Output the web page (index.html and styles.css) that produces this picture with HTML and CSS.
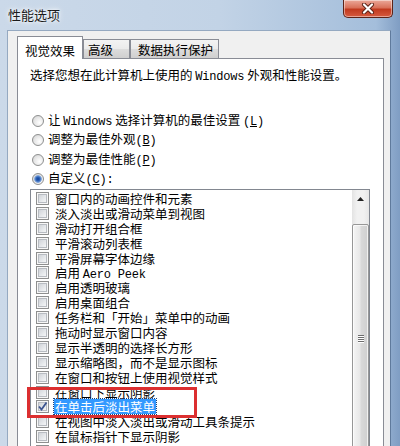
FILE: index.html
```html
<!DOCTYPE html>
<html lang="zh-CN">
<head>
  <meta charset="UTF-8">
  <meta name="viewport" content="width=device-width, initial-scale=1.0">
  <title>性能选项</title>
  <link rel="stylesheet" href="styles.css">
</head>
<body>
  <div class="window">
    <div class="titlebar">
      <span class="title">性能选项</span>
      <div class="close-btn">
        <svg width="14" height="11" viewBox="0 0 14 11">
          <path d="M3 1.5 L11 9.5 M11 1.5 L3 9.5" stroke="#5a2116" stroke-width="4" stroke-linecap="round"/>
          <path d="M3 1.5 L11 9.5 M11 1.5 L3 9.5" stroke="#fff" stroke-width="2.2" stroke-linecap="round"/>
        </svg>
      </div>
    </div>

    <div class="frame">
      <div class="client">
        <!-- tabs -->
        <div class="tabs">
          <div class="tab active">视觉效果</div>
          <div class="tab tab-adv">高级</div>
          <div class="tab tab-dep">数据执行保护</div>
        </div>

        <div class="panel">
          <p class="intro">选择您想在此计算机上使用的 <span class="latin">Windows</span> 外观和性能设置。</p>

          <div class="radio-group">
            <div class="radio"><span class="radio-mark"></span><span class="radio-text">让 <span class="latin">Windows</span> 选择计算机的最佳设置 <span class="latin">(<u>L</u>)</span></span></div>
            <div class="radio"><span class="radio-mark"></span><span class="radio-text">调整为最佳外观<span class="latin">(<u>B</u>)</span></span></div>
            <div class="radio"><span class="radio-mark"></span><span class="radio-text">调整为最佳性能<span class="latin">(<u>P</u>)</span></span></div>
            <div class="radio"><span class="radio-mark on"></span><span class="radio-text">自定义<span class="latin">(<u>C</u>):</span></span></div>
          </div>

          <div class="listbox">
            <ul class="items">
              <li class="item"><span class="check"></span><span class="label">窗口内的动画控件和元素</span></li>
              <li class="item"><span class="check"></span><span class="label">淡入淡出或滑动菜单到视图</span></li>
              <li class="item"><span class="check"></span><span class="label">滑动打开组合框</span></li>
              <li class="item"><span class="check"></span><span class="label">平滑滚动列表框</span></li>
              <li class="item"><span class="check"></span><span class="label">平滑屏幕字体边缘</span></li>
              <li class="item"><span class="check"></span><span class="label">启用 <span class="latin">Aero Peek</span></span></li>
              <li class="item"><span class="check"></span><span class="label">启用透明玻璃</span></li>
              <li class="item"><span class="check"></span><span class="label">启用桌面组合</span></li>
              <li class="item"><span class="check"></span><span class="label">任务栏和「开始」菜单中的动画</span></li>
              <li class="item"><span class="check"></span><span class="label">拖动时显示窗口内容</span></li>
              <li class="item"><span class="check"></span><span class="label">显示半透明的选择长方形</span></li>
              <li class="item"><span class="check"></span><span class="label">显示缩略图，而不是显示图标</span></li>
              <li class="item"><span class="check"></span><span class="label">在窗口和按钮上使用视觉样式</span></li>
              <li class="item"><span class="check"></span><span class="label">在窗口下显示阴影</span></li>
              <li class="item">
                <span class="check">
                  <svg width="11" height="11" viewBox="0 0 11 11"><path d="M2 5.5 L4.5 8.5 L9.5 1.5" fill="none" stroke="#3d5590" stroke-width="1.8"/></svg>
                </span>
                <span class="label selected">在单击后淡出菜单</span>
              </li>
              <li class="item"><span class="check"></span><span class="label">在视图中淡入淡出或滑动工具条提示</span></li>
              <li class="item"><span class="check"></span><span class="label">在鼠标指针下显示阴影</span></li>
              <li class="item"><span class="check"></span><span class="label">在桌面上为图标标签使用阴影</span></li>
            </ul>

            <div class="scrollbar">
              <div class="scroll-up">
                <svg width="7" height="4" viewBox="0 0 7 4"><polygon points="0,4 3.5,0 7,4" fill="#222"/></svg>
              </div>
              <div class="thumb">
                <span class="grip"></span>
                <span class="grip"></span>
                <span class="grip"></span>
                <span class="grip"></span>
              </div>
            </div>
          </div>
        </div>
      </div>
    </div>

    <!-- red highlight box drawn over the list -->
    <div class="annotation"></div>
  </div>
</body>
</html>
```

FILE: styles.css
```css
body {
  margin: 0;
  font-family: "Noto Sans CJK SC", sans-serif;
  font-size: 12.5px;
  color: #000;
}

.window {
  position: relative;
  width: 400px;
  height: 446px;
  overflow: hidden;
  display: flex;
  flex-direction: column;
  background: linear-gradient(to right, #cbd9e9 0%, #c2d3e6 55%, #a4bedb 94%, #7f9dc3 100%);
}

.titlebar {
  height: 30px;
  flex-shrink: 0;
  display: flex;
  align-items: flex-start;
}

.title {
  padding: 7px 0 0 8px;
  line-height: 16px;
  font-size: 13px;
  color: #1b1b1b;
  text-shadow: 0 0 6px #fff, 0 0 3px #fff;
}

.close-btn {
  margin-left: auto;
  margin-right: 7px;
  width: 50px;
  height: 18px;
  box-sizing: border-box;
  border: 1px solid #5c2318;
  border-top: none;
  border-radius: 0 0 5px 5px;
  background: linear-gradient(#eba99a, #d9715a 45%, #c13a1f 55%, #d65a3f 100%);
  box-shadow: inset 0 0 0 1px rgba(255, 255, 255, 0.45);
  display: flex;
  align-items: center;
  justify-content: center;
}

.frame {
  flex: 1;
  display: flex;
  padding: 0 9px 0 7px;
}

.client {
  flex: 1;
  background-color: #f0f0f0;
  border: 1px solid #95a9c1;
  border-right-color: #5f7a9c;
  border-bottom: none;
  padding: 5px 6px 0 9px;
}

/* tabs */
.tabs {
  position: relative;
  z-index: 1;
  display: flex;
  align-items: flex-end;
  height: 23px;
  margin-bottom: -1px;
}

.tab {
  height: 16px;
  line-height: 16px;
  padding: 1px 0 1px 0;
  border: 1px solid #898c95;
  border-bottom: none;
  margin-bottom: 1px;
  background: linear-gradient(#f3f3f3, #ebebeb 50%, #dddddd 50%, #cfcfcf);
  white-space: nowrap;
}

.tab.active {
  height: 16px;
  padding: 6px 7px 0 7px;
  margin-bottom: 0;
  background: #fff;
}

.tab-adv {
  padding: 2px 16px 0 4px;
}

.tab-dep {
  padding: 2px 5px 0 7px;
}

.panel {
  flex: 1;
  height: 420px;
  background-color: #fff;
  border: 1px solid #898c95;
}

.intro {
  margin: 0;
  padding: 8px 0 0 12px;
  line-height: 16px;
  white-space: nowrap;
}

.latin {
  font-family: "Liberation Mono", monospace;
  font-size: 12px;
  letter-spacing: -0.2px;
}

/* radio buttons */
.radio-group {
  margin: 26px 0 0 14px;
}

.radio {
  display: flex;
  align-items: center;
  height: 19.5px;
  white-space: nowrap;
}

.radio-text {
  line-height: 16px;
}

.radio-mark {
  width: 12px;
  height: 12px;
  margin-right: 4px;
  box-sizing: border-box;
  border: 1px solid #8e8f8f;
  border-radius: 50%;
  background: radial-gradient(circle at 65% 65%, #ffffff, #e4e4e4 60%, #c9c9c9);
  flex-shrink: 0;
}

.radio-mark.on {
  background: radial-gradient(circle, #123f94 0, #2d63b8 2px, #86a9dc 3.5px, rgba(255, 255, 255, 0) 4.2px),
              radial-gradient(circle at 65% 65%, #ffffff, #e4e4e4 60%, #c9c9c9);
}

/* list box */
.listbox {
  display: flex;
  width: 340px;
  height: 300px;
  box-sizing: border-box;
  margin-left: 12px;
  border: 1px solid #828790;
}

.items {
  flex: 1;
  list-style: none;
  margin: 0;
  padding: 1px 0 0 5px;
}

.item {
  display: flex;
  align-items: center;
  height: 14.9px;
  white-space: nowrap;
}

.check {
  width: 13px;
  height: 13px;
  margin-right: 5px;
  box-sizing: border-box;
  flex-shrink: 0;
  border: 1px solid #8e8f8f;
  background: linear-gradient(135deg, #c6cad0, #eef0f2 70%, #fafafa);
  box-shadow: inset 0 0 0 1px #f7f7f7, inset 0 0 0 2px #b8bcc2;
  display: flex;
  align-items: center;
  justify-content: center;
}

.label {
  display: inline-block;
  height: 15px;
  padding: 0 1px;
  line-height: 15px;
}

.label.selected {
  background-color: #3399ff;
  color: #fff;
  outline: 1px dotted #1a3f7a;
}

.scrollbar {
  width: 17px;
  flex-shrink: 0;
  display: flex;
  flex-direction: column;
  background: linear-gradient(to right, #e3e3e3, #f1f1f1 30%, #f1f1f1 70%, #e6e6e6);
}

.scroll-up {
  height: 17px;
  display: flex;
  align-items: center;
  justify-content: center;
}

.thumb {
  margin-top: 17px;
  height: 228px;
  flex-shrink: 0;
  box-sizing: border-box;
  border: 1px solid #979797;
  border-radius: 2px;
  background: linear-gradient(to right, #f5f5f5, #e8e8e8 45%, #d9d9d9 55%, #cfcfcf);
  box-shadow: inset 0 0 0 1px rgba(255, 255, 255, 0.7);
  display: flex;
  flex-direction: column;
  align-items: center;
  justify-content: center;
  gap: 1px;
}

.grip {
  width: 6px;
  height: 1px;
  background-color: #6c6c6c;
  box-shadow: 0 1px 0 #fff;
}

.annotation {
  position: absolute;
  left: 27px;
  top: 387px;
  width: 170px;
  height: 31px;
  box-sizing: border-box;
  border: 3px solid #dc2f30;
}
```
